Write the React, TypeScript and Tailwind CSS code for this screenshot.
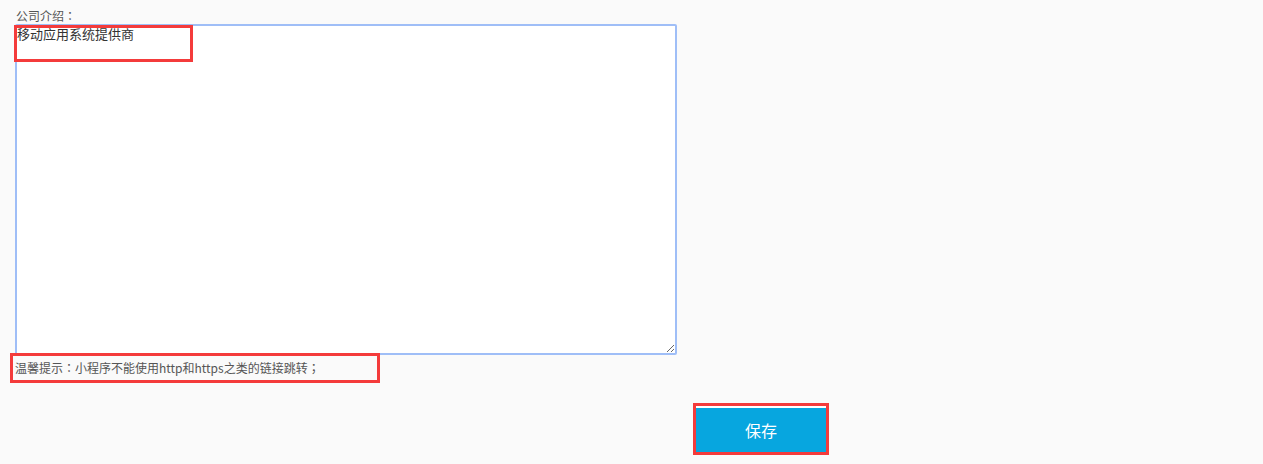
// full-width colon / semicolon drawn centred, as the reference shows them
function Punct({ children }: { children: string }) {
  return <span className="font-['Noto_Sans_CJK_JP','Noto_Sans_CJK_SC',sans-serif]">{children}</span>;
}

// red annotation frame laid over a piece of content
function Mark({ className }: { className: string }) {
  return <div className={`pointer-events-none absolute border-[3px] border-[#f43b3b] ${className}`} />;
}

export default function App() {
  return (
    <div className="flex h-[464px] w-[1263px] flex-col items-start overflow-hidden bg-[#fafafa] pl-[15px] pt-[8px] font-['Microsoft_YaHei','Noto_Sans_CJK_SC','Noto_Sans',sans-serif] text-[#555]">
      <div className="pl-px text-[12px] leading-[16px]">
        公司介绍<Punct>：</Punct>
      </div>

      <div className="relative">
        <textarea
          defaultValue="移动应用系统提供商"
          className="block h-[331px] w-[662px] rounded-[2px] border-2 border-[#9fbef7] bg-white p-0 font-['Microsoft_YaHei','Noto_Sans_CJK_SC',sans-serif] text-[13px] leading-[16px] text-[#333] outline-none"
        />
        <Mark className="-left-px top-px h-[37px] w-[179px]" />
      </div>

      <div className="relative mt-[5px] text-[12px] leading-[16px]">
        温馨提示<Punct>：</Punct>小程序不能使用http和https之类的链接跳转<Punct>；</Punct>
        <Mark className="-left-[5px] -top-[7px] h-[30px] w-[370px]" />
      </div>

      <div className="relative ml-[681px] mt-[30px]">
        <button className="block h-[46px] w-[130px] border-t-2 border-white bg-[#07a6df] text-[16px] text-white">
          保存
        </button>
        <Mark className="-left-[3px] -top-[3px] h-[52px] w-[136px]" />
      </div>
    </div>
  );
}
